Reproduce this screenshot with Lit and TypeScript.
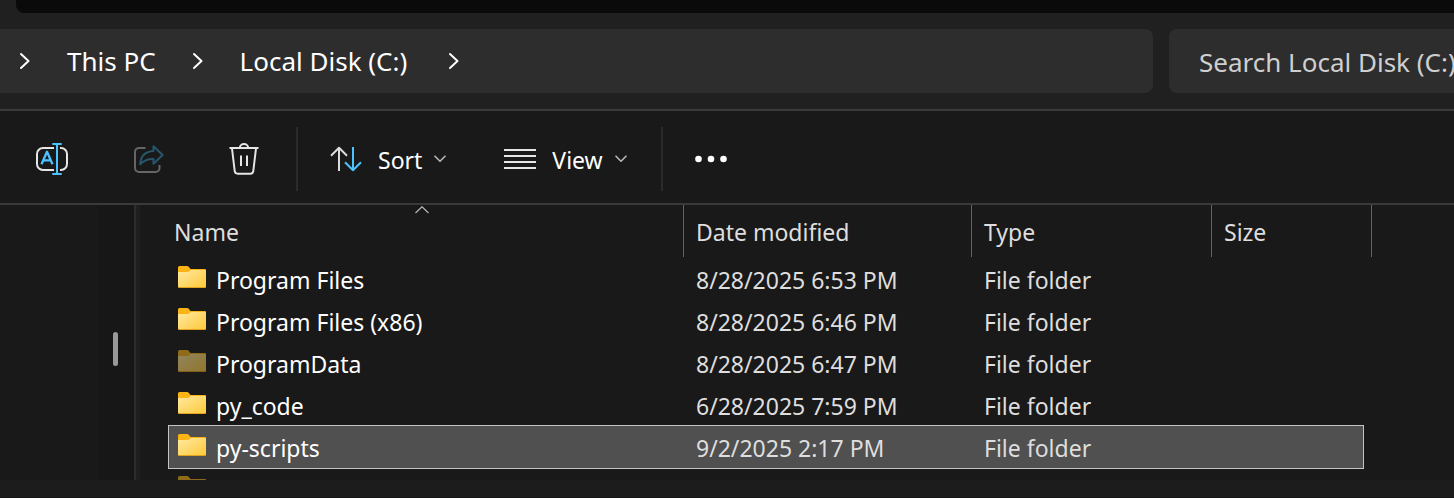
import { LitElement, html, css, svg } from "lit";
import { customElement, property, state } from "lit/decorators.js";
import { classMap } from "lit/directives/class-map.js";

interface Entry {
  name: string;
  modified: string;
  type: string;
  hidden?: boolean;
}

const ENTRIES: Entry[] = [
  { name: "Program Files", modified: "8/28/2025 6:53 PM", type: "File folder" },
  { name: "Program Files (x86)", modified: "8/28/2025 6:46 PM", type: "File folder" },
  { name: "ProgramData", modified: "8/28/2025 6:47 PM", type: "File folder", hidden: true },
  { name: "py_code", modified: "6/28/2025 7:59 PM", type: "File folder" },
  { name: "py-scripts", modified: "9/2/2025 2:17 PM", type: "File folder" },
  { name: "", modified: "", type: "", hidden: true },
];

const crumbArrow = html`<svg class="arrow" width="12" height="18" viewBox="0 0 12 18" aria-hidden="true">
  <path d="M2 2l7.5 7L2 16" fill="none" stroke="#fff" stroke-width="2" stroke-linecap="round" stroke-linejoin="round" />
</svg>`;

const chevron = html`<svg width="12" height="8" viewBox="0 0 12 8" aria-hidden="true">
  <path d="M1 1.2l5 5 5-5" fill="none" stroke="#b8b8b8" stroke-width="1.6" stroke-linecap="round" stroke-linejoin="round" />
</svg>`;

const renameIcon = svg`
  <path d="M18 5H7a6 6 0 0 0-6 6v10a6 6 0 0 0 6 6h11M24 5h1a6 6 0 0 1 6 6v10a6 6 0 0 1-6 6h-1" stroke="#e6e6e6" />
  <path d="M5.500 21.300L11 8.800l5.500 12.500M7.300 17.300h7.500" stroke="#4cc2ff" stroke-width="2.300" />
  <path d="M16.300 1h9.400M16.300 31h9.400M21 1v30" stroke="#4cc2ff" />`;

const shareIcon = svg`
  <path d="M13.500 5H7a4 4 0 0 0-4 4v16a4 4 0 0 0 4 4h16.500a4 4 0 0 0 4-4v-3" stroke="#666" />
  <path d="M21.500 3.200L30.600 12l-9.100 8.800V16c-5.600-.3-9.500 1.200-13.300 5.200C8.600 13.800 12.700 8.500 21.500 8z" stroke="#27566d" />`;

const trashIcon = svg`
  <path d="M1.500 5h29M11.800 5a4.200 4 0 0 1 8.400 0M4 5.500l2.700 22.500a3 3 0 0 0 3 2.700h12.600a3 3 0 0 0 3-2.700L28 5.500M13 12.500v10.500M19 12.500v10.500" stroke="#e6e6e6" />`;

const sortIcon = svg`
  <path d="M9 28V5M1 12.800L9 4.800l8 8" stroke="#dcdcdc" />
  <path d="M23 4v23M15 19.200l8 8 8-8" stroke="#4cc2ff" />`;

const viewIcon = svg`
  <path d="M0 7h32M0 13h32M0 19h32M0 25h32" stroke="#e6e6e6" />`;

const moreIcon = svg`
  <g fill="#fff"><circle cx="3.500" cy="16" r="3.300" /><circle cx="16" cy="16" r="3.300" /><circle cx="28.500" cy="16" r="3.300" /></g>`;

const icon = (body: unknown) => html`<svg
  class="icon" width="32" height="32" viewBox="0 0 32 32" fill="none" stroke-width="2" stroke-linejoin="round" aria-hidden="true"
>${body}</svg>`;

@customElement("folder-icon")
class FolderIcon extends LitElement {
  @property({ type: Boolean }) dim = false;

  static styles = css`
    :host { display: block; flex: none; width: 28px; height: 22px; }
    svg { display: block; }
    .dim { opacity: 0.52; }
  `;

  render() {
    return html`<svg class=${classMap({ dim: this.dim })} width="28" height="22" viewBox="0 0 28 22" aria-hidden="true">
      <defs>
        <linearGradient id="front" x1="0" y1="0" x2="1" y2="1">
          <stop offset="0" stop-color="#ffe9a0" />
          <stop offset="1" stop-color="#ffc93a" />
        </linearGradient>
      </defs>
      <path d="M0 1.500Q0 0 1.500 0H9q1.200 0 1.900 1L12.500 3H27q1 0 1 1v6H0z" fill="#fbb416" />
      <path d="M0 6h9.500q1 0 1.800-.8L13 4h14q1 0 1 1v15.500q0 1-1 1H1q-1 0-1-1z" fill="url(#front)" />
      <path d="M0 20.500q0 1.500 1 1.500h26q1 0 1-1.500l-1 .5H1z" fill="#e2a21c" />
    </svg>`;
  }
}

@customElement("app-root")
class AppRoot extends LitElement {
  @state() private selected = "py-scripts";

  static styles = css`
    :host {
      display: flex;
      flex-direction: column;
      height: 100vh;
      overflow: hidden;
      background: #191919;
      color: #fff;
      font-family: "Noto Sans", "Open Sans", sans-serif;
      font-size: 23px;
      line-height: 32px;
    }
    * { box-sizing: border-box; }
    button, input {
      margin: 0;
      border: 0;
      padding: 0;
      background: none;
      color: inherit;
      font: inherit;
    }
    svg { display: block; flex: none; }

    .top { background: #202020; border-bottom: 2px solid #3a3a3a; }
    .tabs { height: 13px; margin-left: 16px; border-bottom-left-radius: 8px; background: #0a0a0a; }
    .location { display: flex; gap: 16px; padding: 16px 0; font-size: 26px; }
    .crumbs {
      display: flex;
      align-items: center;
      flex: 1;
      min-width: 0;
      height: 64px;
      padding-left: 19px;
      border-radius: 0 8px 8px 0;
      background: #2d2d2d;
      white-space: nowrap;
    }
    .crumbs button { padding: 0 36px; }
    .crumbs button + .arrow + button { padding-right: 41px; }
    .search {
      flex: 0 0 285px;
      min-width: 0;
      height: 64px;
      padding: 2px 0 0 30px;
      border-radius: 8px 0 0 8px;
      background: #2d2d2d;
      outline: none;
    }
    .search::placeholder { color: #cfcfcf; opacity: 1; }

    .tools {
      display: flex;
      align-items: center;
      padding: 16px 20px 12px;
      border-bottom: 2px solid #3a3a3a;
    }
    .tools button { display: flex; align-items: center; justify-content: center; height: 64px; }
    .square { width: 64px; margin-right: 32px; }
    .square.last { margin-right: 20px; }
    .menu { gap: 16px; padding: 0 26px 0 32px; }
    .menu + .menu { padding-right: 34px; }
    .label { display: flex; align-items: center; gap: 12px; }
    .caption { padding-top: 2px; }
    .rule { width: 2px; height: 64px; background: #2b2b2b; }
    .more { padding: 0 32px; }

    .body { display: flex; flex: 1; min-height: 0; overflow: hidden; }
    .pane { display: flex; justify-content: flex-end; flex: 0 0 140px; border-right: 4px solid #1f1f1f; }
    .track {
      width: 38px;
      padding: 127px 0 0 15px;
      border-right: 2px solid #2d2d2d;
      background: #171717;
    }
    .thumb { width: 5px; height: 34px; border-radius: 3px; background: #999; }

    table { display: block; margin-left: 29px; }
    thead, tbody { display: block; }
    tbody { margin-right: 9px; }
    tr { display: grid; grid-template-columns: 515px 288px 240px 151px; }
    thead tr { grid-template-columns: 515px 288px 240px 160px; height: 53px; }
    th {
      position: relative;
      height: 52px;
      border-right: 1px solid #636363;
      padding: 11px 12px 0;
      font-weight: 400;
      text-align: left;
      color: #dedede;
    }
    th:first-child { padding-left: 5px; }
    .caret { position: absolute; top: 1px; left: 246px; }
    td { padding: 6px 12px 0; color: #dedede; white-space: nowrap; }
    td:first-child { display: flex; gap: 10px; padding: 6px 0 0 9px; color: #fff; }
    folder-icon { margin-top: 2px; }
    tbody tr { height: 42px; }
    .selected { outline: 1px solid #c4c4c4; background: #505050; }

    .status { height: 18px; background: #1c1c1c; border-bottom: 1px solid #141414; }
  `;

  render() {
    return html`
      <header class="top">
        <div class="tabs"></div>
        <div class="location">
          <nav class="crumbs" aria-label="Address">
            ${crumbArrow}<button>This PC</button>${crumbArrow}<button>Local Disk (C:)</button>${crumbArrow}
          </nav>
          <input class="search" type="text" aria-label="Search" placeholder="Search Local Disk (C:)" />
        </div>
      </header>
      <div class="tools" role="toolbar">
        <button class="square" aria-label="Rename">${icon(renameIcon)}</button>
        <button class="square" aria-label="Share" disabled>${icon(shareIcon)}</button>
        <button class="square last" aria-label="Delete">${icon(trashIcon)}</button>
        <span class="rule"></span>
        <button class="menu">
          ${icon(sortIcon)}<span class="label"><span class="caption">Sort</span>${chevron}</span>
        </button>
        <button class="menu">
          ${icon(viewIcon)}<span class="label"><span class="caption">View</span>${chevron}</span>
        </button>
        <span class="rule"></span>
        <button class="more" aria-label="See more">${icon(moreIcon)}</button>
      </div>
      <main class="body">
        <aside class="pane"><div class="track"><div class="thumb"></div></div></aside>
        <table>
          <thead>
            <tr>
              <th>
                Name
                <svg class="caret" width="14" height="8" viewBox="0 0 14 8" aria-hidden="true">
                  <path d="M.5 7L7 .7 13.500 7" fill="none" stroke="#b4b4b4" stroke-width="1.200" />
                </svg>
              </th>
              <th>Date modified</th>
              <th>Type</th>
              <th>Size</th>
            </tr>
          </thead>
          <tbody>
            ${ENTRIES.map(
              (e) => html`<tr
                class=${classMap({ selected: e.name === this.selected })}
                @click=${() => (this.selected = e.name)}
              >
                <td><folder-icon ?dim=${!!e.hidden}></folder-icon>${e.name}</td>
                <td>${e.modified}</td>
                <td>${e.type}</td>
                <td></td>
              </tr>`
            )}
          </tbody>
        </table>
      </main>
      <footer class="status"></footer>
    `;
  }
}
